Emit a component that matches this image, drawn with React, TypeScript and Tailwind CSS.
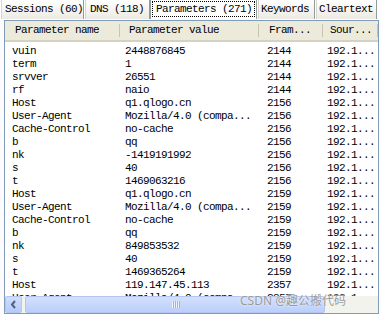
import React from 'react';

const tabs = [
  { label: 'Sessions (60)', w: 'w-[84px]', pl: 'pl-[4px]' },
  { label: 'DNS (118)', w: 'w-[66px]', pl: 'pl-[5px]' },
  { label: 'Parameters (271)', w: 'w-[107px]', pl: 'pl-[5px]', active: true },
  { label: 'Keywords', w: 'w-[58px]', pl: 'pl-[3px]' },
  { label: 'Cleartext', w: 'w-[62px]', pl: 'pl-[3px]' },
];

const rows: [string, string, string][] = [
  ['vuin', '2448876845', '2144'],
  ['term', '1', '2144'],
  ['srvver', '26551', '2144'],
  ['rf', 'naio', '2144'],
  ['Host', 'q1.qlogo.cn', '2156'],
  ['User-Agent', 'Mozilla/4.0 (compa...', '2156'],
  ['Cache-Control', 'no-cache', '2156'],
  ['b', 'qq', '2156'],
  ['nk', '-1419191992', '2156'],
  ['s', '40', '2156'],
  ['t', '1469063216', '2156'],
  ['Host', 'q1.qlogo.cn', '2159'],
  ['User-Agent', 'Mozilla/4.0 (compa...', '2159'],
  ['Cache-Control', 'no-cache', '2159'],
  ['b', 'qq', '2159'],
  ['nk', '849853532', '2159'],
  ['s', '40', '2159'],
  ['t', '1469365264', '2159'],
  ['Host', '119.147.45.113', '2357'],
  ['User-Agent', 'Mozilla/4.0 (compa...', '2357'],
];

export default function App() {
  return (
    <div className="relative w-[381px] h-[314px] overflow-hidden bg-[#fcfcfe] text-black font-['Liberation_Mono',monospace] text-[11px] tracking-[-0.6px] leading-none">
      {/* tab strip */}
      <div className="flex h-[19px]">
        {tabs.map((t) =>
          t.active ? (
            <div key={t.label} className={`${t.w} h-[19px] bg-white border-x border-[#919b9c] px-[1px] pt-[1px]`}>
              <div className="h-[16px] flex items-center pl-[3px] border border-dotted border-black">{t.label}</div>
            </div>
          ) : (
            <div
              key={t.label}
              className={`${t.w} ${t.pl} h-[19px] flex items-center bg-gradient-to-b from-white to-[#eceae2] border-l border-l-white border-r border-r-[#919b9c] shadow-[inset_1px_0_0_#d8d6cc]`}
            >
              {t.label}
            </div>
          )
        )}
        <div className="flex-1 bg-[#fcfcfe]" />
      </div>

      {/* list view */}
      <div className="absolute left-[4px] top-[20px] w-[375px] h-[294px] border border-[#7f9db9] bg-white flex flex-col">
        <div className="h-[21px] flex items-stretch bg-[#ebeadb] border-b-[2px] border-[#d6d2c2] shrink-0">
          <div className="w-[115px] flex items-center pl-[10px] border-r border-[#c7c5b2] my-[3px]">Parameter name</div>
          <div className="w-[139px] flex items-center pl-[9px] border-r border-[#c7c5b2] my-[3px]">Parameter value</div>
          <div className="w-[64px] flex items-center pl-[10px] border-r border-[#c7c5b2] my-[3px]">Fram...</div>
          <div className="w-[55px] flex items-center pl-[7px] border-r border-[#c7c5b2] my-[3px]">Sour...</div>
        </div>

        <div className="flex-1 overflow-hidden pt-[3px]">
          {rows.map((r, i) => (
            <div key={i} className="h-[13px] flex items-center">
              <div className="w-[115px] pl-[7px] whitespace-nowrap">{r[0]}</div>
              <div className="w-[139px] pl-[5px] whitespace-nowrap">{r[1]}</div>
              <div className="w-[64px] pl-[8px]">{r[2]}</div>
              <div className="w-[55px] pl-[4px] whitespace-nowrap">192.1...</div>
            </div>
          ))}
        </div>

        {/* horizontal scrollbar */}
        <div className="h-[17px] shrink-0 flex items-stretch bg-[#f3f3ee] pr-[2px]">
          <div className="w-[17px] flex items-center justify-center rounded-[2px] border border-[#b3c6f3] bg-gradient-to-b from-[#d0defd] to-[#b7cbf9]">
            <svg width="7" height="9" viewBox="0 0 7 9">
              <path d="M5 1 L2 4.5 L5 8" stroke="#4d6185" strokeWidth="2" fill="none" />
            </svg>
          </div>
          <div className="ml-[3px] w-[300px] flex items-center justify-center rounded-[2px] border border-[#b3c6f3] bg-gradient-to-b from-[#d3e0fd] to-[#bccffa]">
            <div className="flex gap-[1px]">
              <div className="w-[1px] h-[7px] bg-[#eef3fe] shadow-[1px_0_0_#9bb2e6]" />
              <div className="w-[1px] h-[7px] bg-[#eef3fe] shadow-[1px_0_0_#9bb2e6]" />
              <div className="w-[1px] h-[7px] bg-[#eef3fe] shadow-[1px_0_0_#9bb2e6]" />
              <div className="w-[1px] h-[7px] bg-[#eef3fe] shadow-[1px_0_0_#9bb2e6]" />
            </div>
          </div>
        </div>
      </div>

      {/* watermark */}
      <div className="absolute left-[240px] top-[295px] text-[12px] tracking-normal text-[#9a9a9a] font-['Noto_Sans','Noto_Sans_CJK_SC',sans-serif] [text-shadow:0_0_2px_#ffffff]">
        CSDN @趣公搬代码
      </div>
    </div>
  );
}
